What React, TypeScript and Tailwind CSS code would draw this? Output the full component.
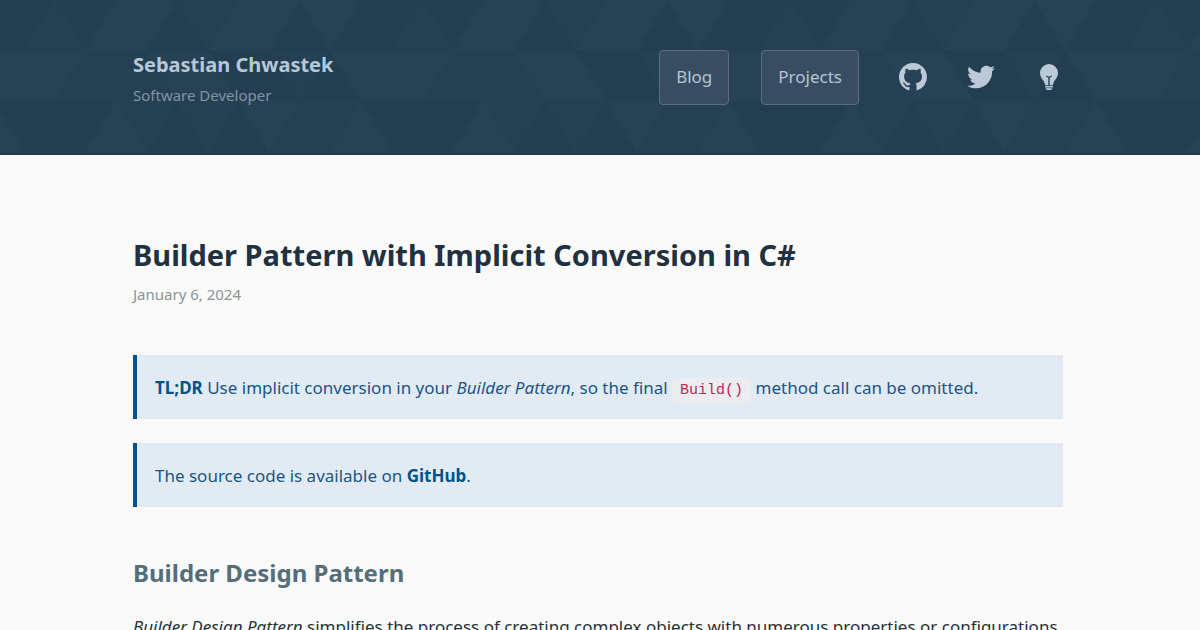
import { FaTwitter } from "react-icons/fa";

const STEP = 30.625;
const ROW = 50.6;
const SHADES = ["#233d51", "#253f53", "#274255"];

// one shade index per triangle, going left to right
const ROWS = [
  [0, 2, 2, 0, 1, 2, 2, 0, 2, 0, 0, 1],
  [1, 1, 1, 2, 2, 0, 0, 1, 0, 2, 2, 2],
  [0, 2, 1, 0, 1, 0, 2, 1, 1, 2, 0, 0],
];

function Triangles() {
  const polys = ROWS.flatMap((row, r) =>
    [...row, row[0]].map((shade, i) => {
      const up = (i + r) % 2 === 1;
      const base = up ? (r + 1) * ROW : r * ROW;
      const tip = up ? r * ROW : (r + 1) * ROW;
      const x = i * STEP;
      return (
        <polygon
          key={`${r}-${i}`}
          points={`${x - STEP},${base} ${x + STEP},${base} ${x},${tip}`}
          fill={SHADES[shade]}
        />
      );
    })
  );

  return (
    <svg className="absolute inset-0 w-full h-full" aria-hidden="true">
      <defs>
        <pattern id="triangles" x="85.5" y="0" width={STEP * 12} height={ROW * 3 + 2} patternUnits="userSpaceOnUse">
          <rect width="100%" height="100%" fill="#243e52" />
          {polys}
        </pattern>
      </defs>
      <rect width="100%" height="100%" fill="url(#triangles)" />
    </svg>
  );
}

function NavButton({ href, children }: { href: string; children: React.ReactNode }) {
  return (
    <a
      href={href}
      className="h-[55px] px-4 flex items-center rounded border border-[#5b6c80] bg-[#394d62] text-[17px] text-[#b3c6d1]"
    >
      {children}
    </a>
  );
}

function Octocat() {
  return (
    <svg viewBox="0 0 16 16" className="w-7 h-7" fill="currentColor">
      <path d="M8 0C3.58 0 0 3.58 0 8c0 3.54 2.29 6.53 5.47 7.59.4.07.55-.17.55-.38 0-.19-.01-.82-.01-1.49-2.01.37-2.53-.49-2.69-.94-.09-.23-.48-.94-.82-1.13-.28-.15-.68-.52-.01-.53.63-.01 1.08.58 1.23.82.72 1.21 1.87.87 2.33.66.07-.52.28-.87.51-1.07-1.78-.2-3.64-.89-3.64-3.95 0-.87.31-1.59.82-2.15-.08-.2-.36-1.02.08-2.12 0 0 .67-.21 2.2.82.64-.18 1.32-.27 2-.27s1.36.09 2 .27c1.53-1.04 2.2-.82 2.2-.82.44 1.1.16 1.92.08 2.12.51.56.82 1.27.82 2.15 0 3.07-1.87 3.75-3.65 3.95.29.25.54.73.54 1.48 0 1.07-.01 1.93-.01 2.2 0 .21.15.46.55.38A8.01 8.01 0 0 0 16 8c0-4.42-3.58-8-8-8z" />
    </svg>
  );
}

function Bulb() {
  return (
    <svg viewBox="0 0 18 26" className="w-[18px] h-[26px]" fill="currentColor">
      <path d="M9 0a9 9 0 0 0-9 9c0 3.600 2 5.600 3.500 7.800 1 1.600 1.500 3 1.600 4.500h3.200v-7.600L6 12.500l.5-1 2 1h1l2-1 .5 1-2.300 1.200v7.600h3.200c.1-1.500.6-2.900 1.600-4.500C16 14.600 18 12.600 18 9a9 9 0 0 0-9-9z" />
      <path d="M5.200 22.100h7.600v1.400H5.200zM5.600 24.300h6.800c-.3 1-1 1.700-2 1.700H7.600c-1 0-1.700-.7-2-1.700z" />
    </svg>
  );
}

export default function App() {
  return (
    <div className="min-h-screen bg-[#fafafa] font-['Noto_Sans','Open_Sans',sans-serif] text-[#263238]">
      <header className="relative overflow-hidden border-b-2 border-[#283b4b] bg-[#243e52] pr-1">
        <Triangles />
        <div className="relative max-w-[930px] mx-auto pt-11 pb-[43px] flex items-center justify-between">
          <div className="pt-1.5">
            <a href="/" className="block text-xl leading-[30px] font-bold text-[#b6c8d9]">Sebastian Chwastek</a>
            <p className="text-[15px] leading-[30px] text-[#8293a2]">Software Developer</p>
          </div>
          <nav className="flex items-center gap-8">
            <NavButton href="/blog">Blog</NavButton>
            <NavButton href="/projects">Projects</NavButton>
            <div className="ml-2 flex items-center gap-10 text-[#bccad8]">
              <a href="#github" aria-label="GitHub"><Octocat /></a>
              <a href="#twitter" aria-label="Twitter"><FaTwitter size={28} /></a>
              <button type="button" aria-label="Toggle theme" className="w-7 flex justify-center"><Bulb /></button>
            </div>
          </nav>
        </div>
      </header>

      <main className="pr-1 pt-20">
        <article className="max-w-[930px] mx-auto">
          <h1 className="text-[29px] leading-10 font-bold text-[#22313f]">
            Builder Pattern with Implicit Conversion in C#
          </h1>
          <p className="mt-1 text-[15px] leading-[30px] text-[#8b9499]">January 6, 2024</p>

          <div className="mt-[46px] space-y-6 text-[17px] leading-8 text-[#1b5587]">
            <p className="border-l-4 border-[#01528a] bg-[#e2ebf3] pt-[17px] pb-[15px] pl-[18px]">
              <strong className="text-[#01528a]">TL;DR</strong> Use implicit conversion in your{" "}
              <em>Builder Pattern</em>, so the final{" "}
              <code className="rounded-md bg-[#ebedf0] px-2 py-1 font-['Liberation_Mono',monospace] text-[15px] leading-none text-[#c7254e]">Build()</code>{" "}
              method call can be omitted.
            </p>
            <p className="border-l-4 border-[#01528a] bg-[#e2ebf3] pt-[17px] pb-[15px] pl-[18px]">
              The source code is available on <a href="#source" className="font-bold text-[#01528a]">GitHub</a>.
            </p>
          </div>

          <h2 className="mt-12 text-2xl leading-9 font-bold text-[#546e7a]">Builder Design Pattern</h2>
          <p className="mt-5 text-[17px] leading-8">
            <em>Builder Design Pattern</em> simplifies the process of creating complex objects with numerous properties or configurations.
          </p>
        </article>
      </main>
    </div>
  );
}
